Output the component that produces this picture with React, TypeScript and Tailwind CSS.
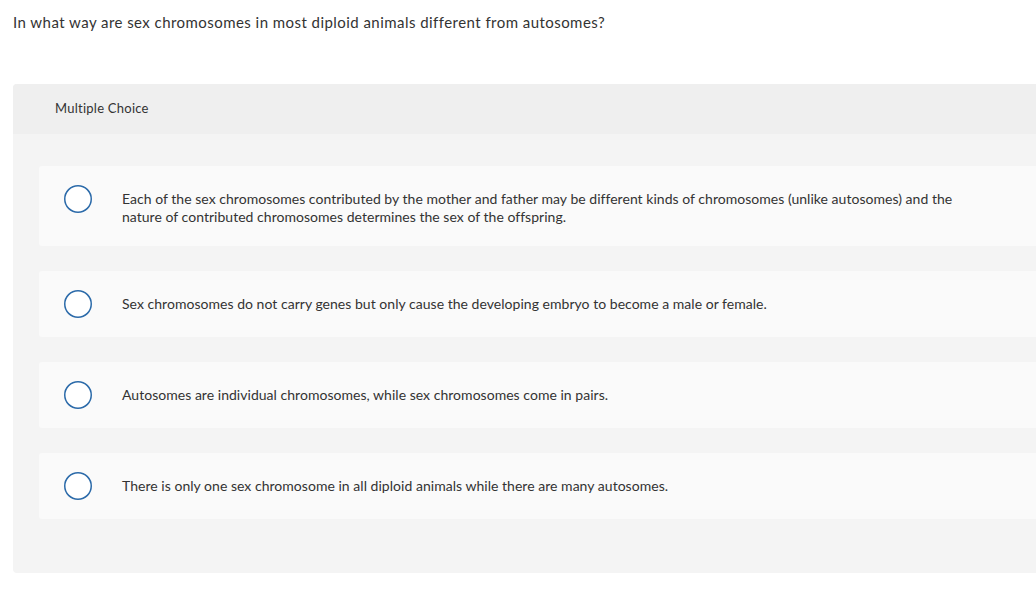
const options = [
  "Each of the sex chromosomes contributed by the mother and father may be different kinds of chromosomes (unlike autosomes) and the nature of contributed chromosomes determines the sex of the offspring.",
  "Sex chromosomes do not carry genes but only cause the developing embryo to become a male or female.",
  "Autosomes are individual chromosomes, while sex chromosomes come in pairs.",
  "There is only one sex chromosome in all diploid animals while there are many autosomes.",
];

function Radio() {
  return (
    <svg width="28" height="28" viewBox="0 0 28 28" className="shrink-0">
      <circle cx="14" cy="14" r="13.25" fill="#ffffff" stroke="#2b6aa9" strokeWidth="1.5" />
    </svg>
  );
}

export default function App() {
  return (
    <div className="min-h-screen overflow-hidden bg-white text-[#333] font-['Lato','Liberation_Sans',sans-serif]">
      <p className="pl-[13px] pt-[13px] text-[15px] leading-[18px] tracking-[0.45px]">
        In what way are sex chromosomes in most diploid animals different from autosomes?
      </p>

      <div className="ml-[13px] mt-[53px] w-[calc(100%+20px)] rounded-[4px] bg-[#f4f4f4] overflow-hidden">
        <div className="h-[50px] bg-[#efefef] pl-[42px] flex items-center text-[13px] tracking-[0.25px]">
          Multiple Choice
        </div>
        <div className="pl-[26px] pt-[32px] pb-[54px] flex flex-col gap-[25px]">
          {options.map((text, i) => (
            <div key={i} className="flex items-start rounded-[3px] bg-[#fafafa] pl-[25px] pr-[100px] py-[19px]">
              <Radio />
              <p className="ml-[30px] pt-[5px] pb-[1px] text-[14px] leading-[18px] tracking-[0.03px] max-w-[840px]">{text}</p>
            </div>
          ))}
        </div>
      </div>
    </div>
  );
}
